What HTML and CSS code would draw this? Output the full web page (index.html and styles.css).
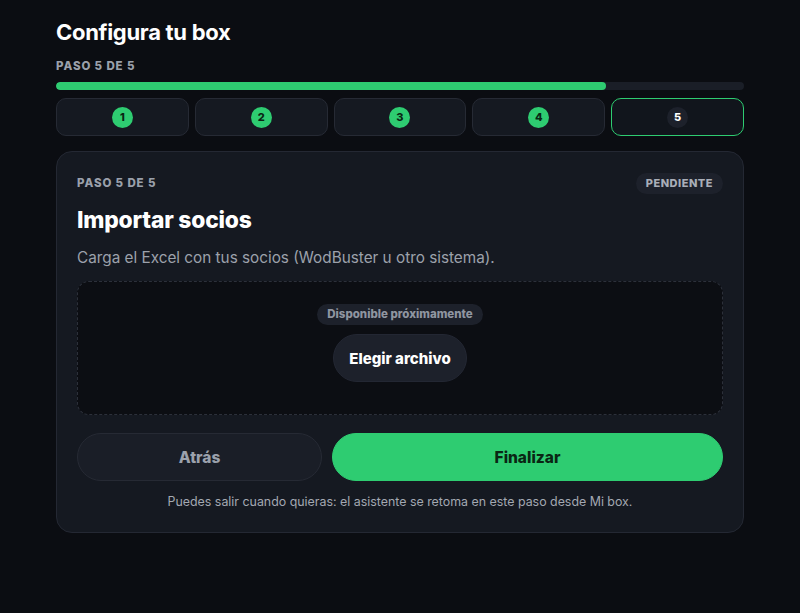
FILE: index.html
```html
<!DOCTYPE html>
<html lang="es">
<head>
<meta charset="utf-8">
<title>Configura tu box</title>
<link rel="stylesheet" href="styles.css">
</head>
<body>
<main class="wizard">
  <h1 class="title">Configura tu box</h1>
  <div class="eyebrow">PASO 5 DE 5</div>
  <div class="progress"><div class="progress-fill" style="width:80%"></div></div>
  <ol class="steps">
    <li class="step done"><span class="dot">1</span></li>
    <li class="step done"><span class="dot">2</span></li>
    <li class="step done"><span class="dot">3</span></li>
    <li class="step done"><span class="dot">4</span></li>
    <li class="step current"><span class="dot">5</span></li>
  </ol>
  <section class="card">
    <div class="card-head">
      <span class="eyebrow small">PASO 5 DE 5</span>
      <span class="badge">PENDIENTE</span>
    </div>
    <h2 class="card-title">Importar socios</h2>
    <p class="card-desc">Carga el Excel con tus socios (WodBuster u otro sistema).</p>
    <div class="dropzone">
      <span class="chip">Disponible próximamente</span>
      <button class="file-btn" type="button">Elegir archivo</button>
    </div>
    <div class="actions">
      <button class="btn btn-back" type="button">Atrás</button>
      <button class="btn btn-finish" type="button">Finalizar</button>
    </div>
    <p class="note">Puedes salir cuando quieras: el asistente se retoma en este paso desde Mi box.</p>
  </section>
</main>
</body>
</html>
```
FILE: styles.css
```css
* { box-sizing: border-box; }
html, body { margin: 0; padding: 0; }
body {
  background: #0b0d12;
  color: #f3f4f6;
  font-family: Inter, "Noto Sans", "Liberation Sans", sans-serif;
  min-height: 613px;
}
.wizard {
  width: 688px;
  margin: 0 0 0 56px;
  padding-top: 19px;
}
.title {
  margin: 0;
  font-size: 22px;
  line-height: 26px;
  font-weight: 700;
  letter-spacing: -0.3px;
  color: #ffffff;
}
.eyebrow {
  margin-top: 14px;
  font-size: 11.5px;
  line-height: 14px;
  font-weight: 800;
  letter-spacing: 0.9px;
  color: #9aa0ab;
}
.progress {
  margin-top: 9px;
  height: 8px;
  border-radius: 4px;
  background: #1a1e27;
  overflow: hidden;
}
.progress-fill {
  height: 100%;
  background: #2ecc71;
  border-radius: 4px;
}
.steps {
  list-style: none;
  margin: 8px 0 0;
  padding: 0;
  display: grid;
  grid-template-columns: repeat(5, 1fr);
  gap: 6px;
}
.step {
  height: 38px;
  border-radius: 10px;
  background: #151921;
  border: 1px solid #262a34;
  display: flex;
  align-items: center;
  justify-content: center;
}
.dot {
  width: 21px;
  height: 21px;
  border-radius: 50%;
  display: flex;
  align-items: center;
  justify-content: center;
  font-size: 11px;
  font-weight: 800;
}
.step.done .dot { background: #2ecc71; color: #0a2614; }
.step.current { border-color: #2ecc71; background: #11151c; }
.step.current .dot { background: #1d212b; color: #ffffff; }
.card {
  margin-top: 15px;
  background: #151921;
  border: 1px solid #242833;
  border-radius: 16px;
  padding: 20px 20px 23px;
}
.card-head {
  display: flex;
  align-items: center;
  justify-content: space-between;
  height: 22px;
}
.eyebrow.small { margin: 0; }
.badge {
  background: #1d212b;
  color: #a9aeb8;
  font-size: 11px;
  font-weight: 800;
  letter-spacing: 0.5px;
  padding: 0 10px;
  height: 21px;
  line-height: 21px;
  border-radius: 11px;
}
.card-title {
  margin: 13px 0 0;
  font-size: 22.8px;
  line-height: 26px;
  font-weight: 800;
  letter-spacing: -0.2px;
  color: #ffffff;
}
.card-desc {
  margin: 15px 0 0;
  font-size: 15.3px;
  line-height: 19px;
  color: #9ca1ab;
}
.dropzone {
  margin-top: 14px;
  height: 134px;
  border: 1px dashed #2c303a;
  border-radius: 12px;
  background: #0c0e13;
  display: flex;
  flex-direction: column;
  align-items: center;
  padding-top: 22px;
  gap: 9px;
}
.chip {
  background: #1d212b;
  color: #8f95a0;
  font-size: 11.5px;
  font-weight: 800;
  height: 21px;
  line-height: 21px;
  padding: 0 10px;
  border-radius: 11px;
}
.file-btn {
  height: 48px;
  padding: 0 15px;
  border-radius: 24px;
  border: 1px solid #232733;
  background: #1d212b;
  color: #ffffff;
  font-family: inherit;
  font-size: 15px;
  font-weight: 800;
}
.actions {
  margin-top: 18px;
  display: grid;
  grid-template-columns: 245fr 391fr;
  gap: 10px;
}
.btn {
  height: 48px;
  border-radius: 24px;
  font-family: inherit;
  font-size: 15.5px;
  font-weight: 800;
}
.btn-back {
  background: #1a1e27;
  border: 1px solid #262a34;
  color: #9ba1ac;
}
.btn-finish {
  background: #2ecc71;
  border: 1px solid #2ecc71;
  color: #0a2614;
}
.note {
  margin: 13px 0 0;
  text-align: center;
  font-size: 12.4px;
  line-height: 15px;
  color: #a3a8b2;
}
```
